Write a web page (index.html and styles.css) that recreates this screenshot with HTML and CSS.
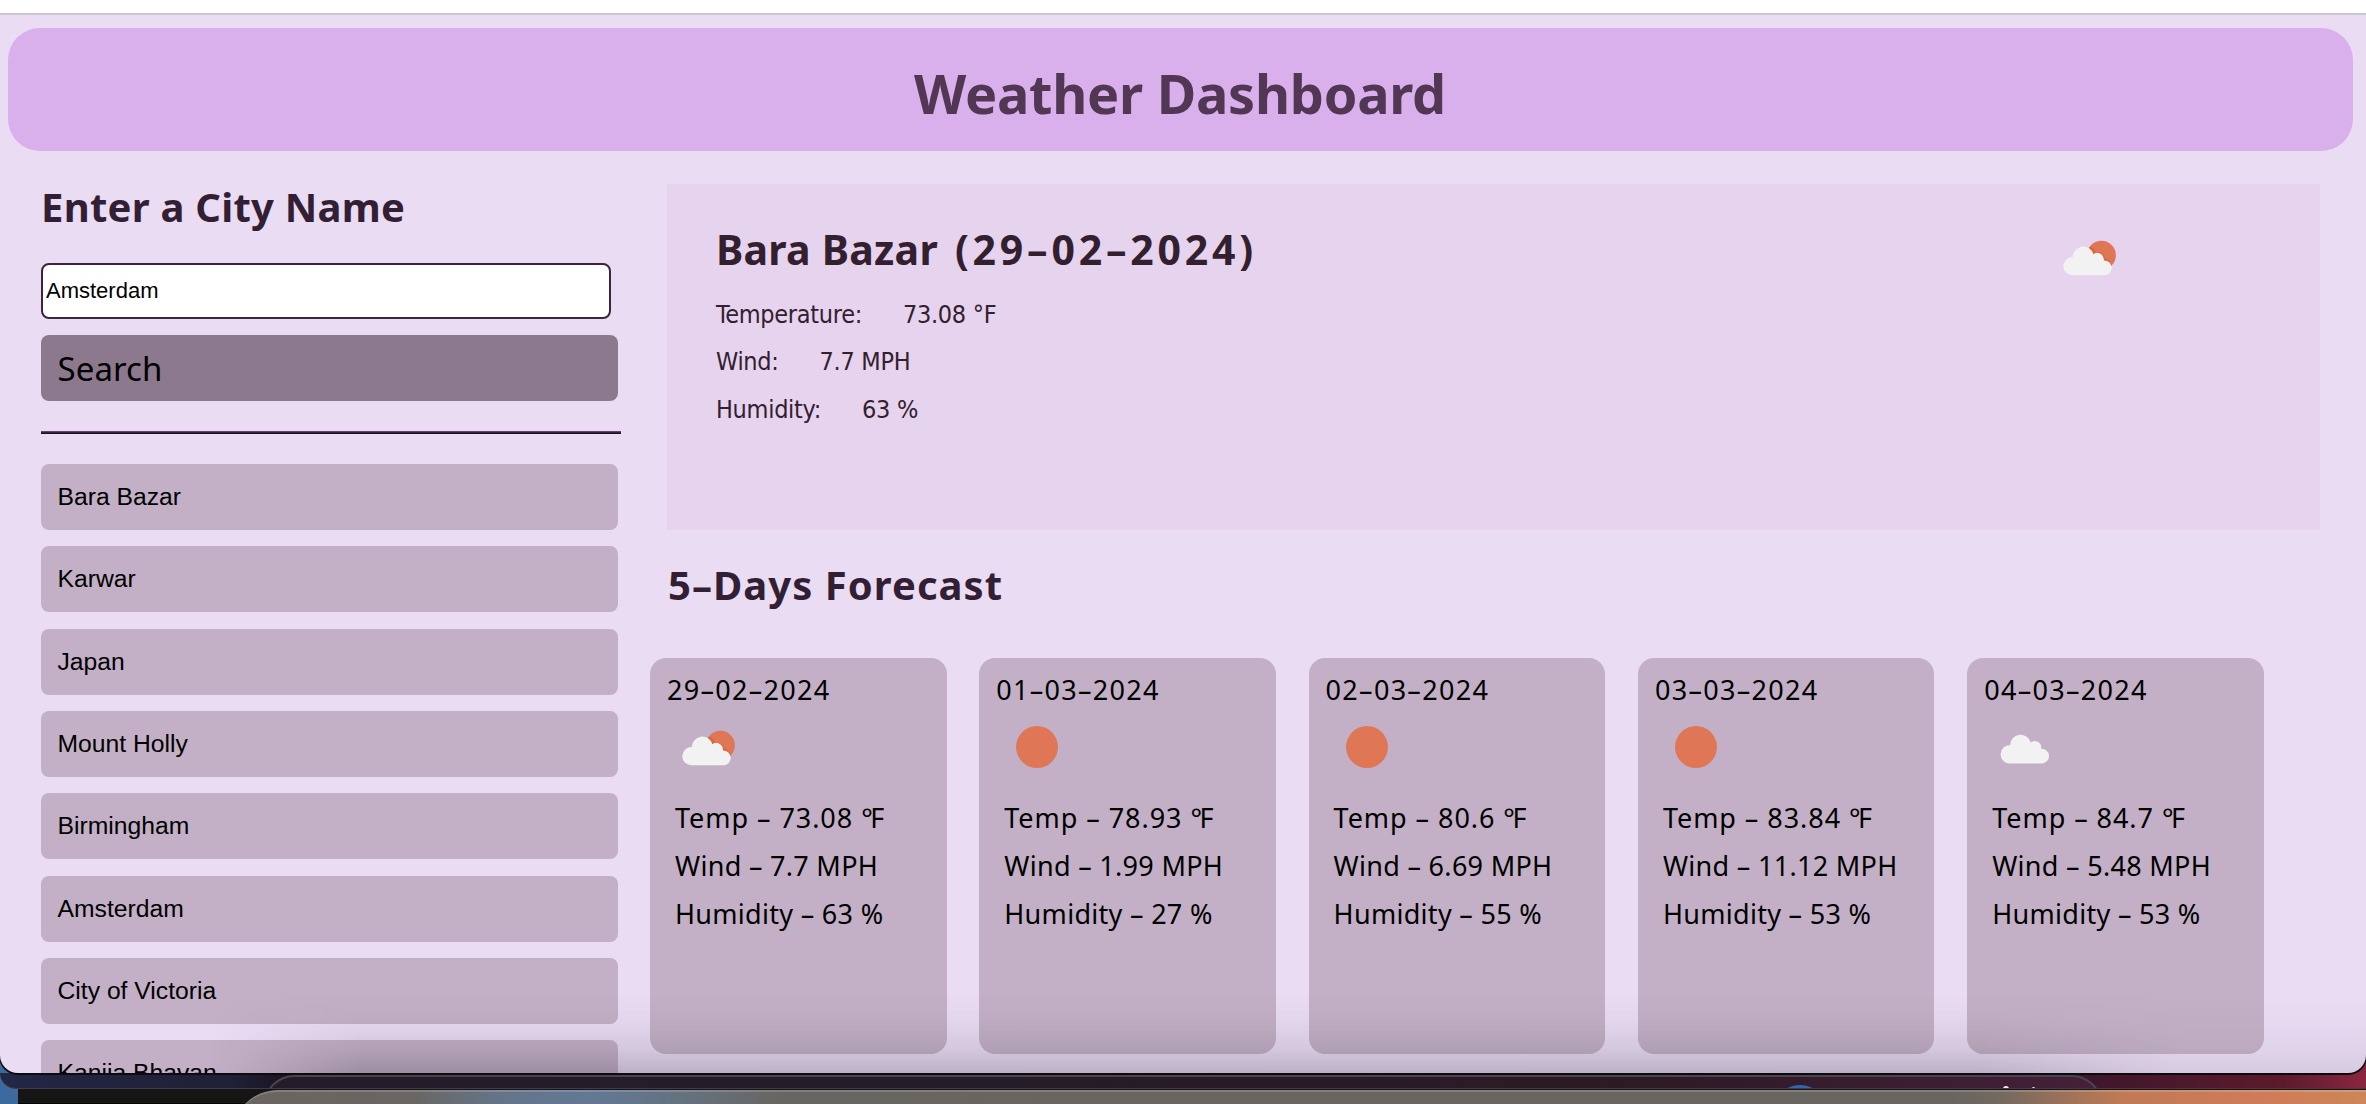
FILE: index.html
```html
<!DOCTYPE html>
<html lang="en">
<head>
<meta charset="utf-8">
<title>Weather Dashboard</title>
<link rel="stylesheet" href="styles.css">
</head>
<body>
<svg class="defs" aria-hidden="true">
  <symbol id="cloud" viewBox="0 0 82 82">
    <path d="M24 59.2A9 9 0 0 1 24.8 41A10.5 10.5 0 0 1 45.4 38.2A6.6 6.6 0 0 1 55.8 44.6A7.3 7.3 0 0 1 57 59.2Z" fill="#f2f2f2"/>
  </symbol>
  <symbol id="sun" viewBox="0 0 82 82">
    <circle cx="41" cy="41" r="21" fill="#df7757"/>
  </symbol>
  <symbol id="cloud-sun" viewBox="0 0 82 82">
    <circle cx="53.4" cy="39.3" r="14.5" fill="#df7757"/>
    <path d="M41 31Q46 31 47.5 36Q55 35 57 42.5Q61 43 63.5 48.5L60 52H40Z" fill="#dc6544"/>
    <use href="#cloud" width="82" height="82"/>
  </symbol>
</svg>
<div class="window">
  <div class="toolbar"></div>
  <header class="header"><h1>Weather Dashboard</h1></header>
  <main class="layout">
    <aside class="sidebar">
      <h2>Enter a City Name</h2>
      <input class="city" type="text" value="Amsterdam">
      <button class="search">Search</button>
      <div class="rule"></div>
      <div class="history">
        <button>Bara Bazar</button>
        <button>Karwar</button>
        <button>Japan</button>
        <button>Mount Holly</button>
        <button>Birmingham</button>
        <button>Amsterdam</button>
        <button>City of Victoria</button>
        <button>Kanija Bhavan</button>
      </div>
    </aside>
    <section class="content">
      <article class="today">
        <div class="today-text">
          <h2>Bara Bazar <span class="date">(29–02–2024)</span></h2>
          <p>Temperature:<span>73.08 °F</span></p>
          <p>Wind:<span>7.7 MPH</span></p>
          <p>Humidity:<span>63 %</span></p>
        </div>
        <svg class="icon"><use href="#cloud-sun"/></svg>
      </article>
      <h2 class="forecast-title">5–Days Forecast</h2>
      <div class="cards">
        <article class="card"><h3>29–02–2024</h3><svg class="icon"><use href="#cloud-sun"/></svg>
          <p class="temp">Temp – 73.08 <span class="deg">°</span>F</p><p>Wind – 7.7 MPH</p><p>Humidity – 63 %</p></article>
        <article class="card"><h3>01–03–2024</h3><svg class="icon"><use href="#sun"/></svg>
          <p class="temp">Temp – 78.93 <span class="deg">°</span>F</p><p>Wind – 1.99 MPH</p><p>Humidity – 27 %</p></article>
        <article class="card"><h3>02–03–2024</h3><svg class="icon"><use href="#sun"/></svg>
          <p class="temp">Temp – 80.6 <span class="deg">°</span>F</p><p>Wind – 6.69 MPH</p><p>Humidity – 55 %</p></article>
        <article class="card"><h3>03–03–2024</h3><svg class="icon"><use href="#sun"/></svg>
          <p class="temp">Temp – 83.84 <span class="deg">°</span>F</p><p>Wind – 11.12 MPH</p><p>Humidity – 53 %</p></article>
        <article class="card"><h3>04–03–2024</h3><svg class="icon"><use href="#cloud" x="1.3" y="-1.8"/></svg>
          <p class="temp">Temp – 84.7 <span class="deg">°</span>F</p><p>Wind – 5.48 MPH</p><p>Humidity – 53 %</p></article>
      </div>
    </section>
  </main>
  <div class="shade"></div>
</div>
<div class="desktop">
  <div class="strip"><div class="tray"><i class="dot"></i><i class="speck"></i><i class="speck small"></i></div></div>
  <div class="panel"></div>
  <div class="dock"></div>
</div>
</body>
</html>
```
FILE: styles.css
```css
* { box-sizing: border-box; }
body {
  margin: 0;
  height: 1104px;
  overflow: hidden;
  background: linear-gradient(90deg, #3c6a9f 0, #3c6a9f 40px, #14101a 60px, #14101a 2200px, #54182c 2290px, #8a263f 2366px);
  font-family: "Noto Sans", sans-serif;
  color: #000;
}
h1, h2, h3, p { margin: 0; }
.defs { display: none; }
.window {
  position: relative;
  z-index: 1;
  height: 1073px;
  overflow: hidden;
  background: #e9dcf3;
  border-radius: 0 0 18px 18px;
  box-shadow: 0 1px 0 1px #0d0b10;
}
.toolbar {
  height: 14.5px;
  background: #fff;
  border-bottom: 2px solid #cac8cd;
}
.header {
  height: 123px;
  margin: 13.5px 13px 0 8px;
  padding: 7px 1px 0 0;
  background: #d9b0eb;
  border-radius: 32px;
  text-align: center;
}
.header h1 {
  font-size: 54px;
  line-height: 117px;
  letter-spacing: -0.25px;
  color: #523754;
}
.layout {
  display: flex;
  padding-left: 41px;
}
.sidebar {
  width: 626px;
  padding-top: 30px;
  flex: none;
}
h2 {
  font-size: 40px;
  line-height: 50px;
  color: #331f33;
}
.sidebar h2 { letter-spacing: 0.25px; padding-top: 1px; margin-bottom: -1px; }
.city {
  display: block;
  width: 570px;
  height: 56px;
  margin: 32px 0 16px;
  padding: 0 3px;
  border: 2px solid #3a263c;
  border-radius: 8px;
  background: #fff;
  font: 22px "Liberation Sans", Arial, sans-serif;
  color: #000;
}
button {
  display: block;
  width: 576.5px;
  height: 66px;
  padding: 0 16.5px;
  border: 0;
  border-radius: 8px;
  background: #c3b0c6;
  font: 24.7px "Liberation Sans", Arial, sans-serif;
  color: #000;
  text-align: left;
}
.search {
  background: #8d798e;
  font: 33px "Noto Sans", sans-serif;
  letter-spacing: 0.1px;
}
.rule {
  width: 580px;
  height: 3px;
  margin: 30px 0;
  background: linear-gradient(#6b4075 34%, #3c1f45 34%, #3c1f45 67%, #1a1020 67%);
}
.history {
  display: flex;
  flex-direction: column;
  gap: 16.35px;
}
.history button { flex: none; }
.content {
  flex: none;
  width: 1653px;
  padding-top: 33px;
}
.today {
  display: flex;
  justify-content: space-between;
  height: 346px;
  padding: 31.5px 190px 0 49px;
  background: #e6d3ee;
}
.today-text { padding-top: 8.5px; color: #33202f; }
.today h2 {
  margin-bottom: 16.5px;
  font-size: 41px;
  letter-spacing: 0.25px;
  color: #33202f;
}
.today .date { margin-left: 6px; letter-spacing: 3.8px; }
.today p {
  font: 25px/47.5px "DejaVu Sans Condensed", "DejaVu Sans", sans-serif;
  font-stretch: condensed;
  letter-spacing: -0.3px;
}
.today p span { margin-left: 41px; }
.icon {
  display: block;
  flex: none;
  width: 82px;
  height: 82px;
}
.forecast-title {
  margin: 30px 0 48px 1px;
  letter-spacing: 1.05px;
}
.cards {
  display: flex;
  gap: 32.8px;
  margin-left: -17px;
}
.card {
  flex: none;
  width: 296.5px;
  height: 395.7px;
  padding: 15.5px 0 0 17px;
  border-radius: 16px;
  background: #c3b0c6;
}
.card h3 {
  font-size: 27px;
  line-height: 32px;
  font-weight: 400;
  letter-spacing: 1.3px;
}
.card .icon { margin-bottom: 6px; }
.card p {
  padding-left: 8px;
  font-size: 27px;
  line-height: 48px;
  letter-spacing: 0.3px;
  white-space: nowrap;
}
.card .temp { letter-spacing: 0.95px; }
.card .deg { letter-spacing: -2.5px; }

/* shadow cast by the dock over the lower edge of the window */
.shade {
  position: absolute;
  inset: auto 0 0 0;
  height: 80px;
  background: linear-gradient(transparent, rgba(30, 25, 40, 0.03) 35%, rgba(30, 25, 40, 0.1) 70%, rgba(30, 25, 40, 0.22));
  -webkit-mask-image: linear-gradient(90deg, transparent 210px, #000 360px, #000 1980px, rgba(0, 0, 0, 0.4) 2180px);
  mask-image: linear-gradient(90deg, transparent 210px, #000 360px, #000 1980px, rgba(0, 0, 0, 0.4) 2180px);
}
.desktop {
  position: relative;
  height: 31px;
}
.strip {
  height: 16px;
  padding: 2px 264px 0 264px;
  overflow: hidden;
  border-bottom: 1px solid #45394a;
  border-radius: 0 0 0 16px;
  background: linear-gradient(90deg, #222746 0, #202036 230px, #17131e 300px, #17131e 1900px, #42172b 2110px, #5c1a2c 2280px, #8a263f 2366px);
}
.tray {
  position: relative;
  height: 30px;
  border: 2px solid #4b434d;
  border-radius: 34px 34px 0 0;
  background: linear-gradient(90deg, #231d2b, #241c28 40%, #2c1a24 75%, #45203a);
}
.dot, .speck { position: absolute; border-radius: 50%; }
.dot { left: 1506px; top: 8px; width: 56px; height: 56px; background: #3067b5; }
.speck { left: 1737px; top: 9px; width: 6px; height: 6px; background: #eee; }
.speck.small { left: 1766px; top: 10px; width: 3px; height: 3px; }
.panel {
  height: 15px;
  margin-left: 18px;
  background: linear-gradient(#151515 13px, #2a2a2a 13px, #050505 14px);
}
.dock {
  position: absolute;
  left: 232px;
  right: 0;
  top: 17px;
  height: 60px;
  border-top: 2px solid rgba(255, 255, 255, 0.17);
  border-radius: 46px 0 0 0;
  background: linear-gradient(90deg, #6a6560 0, #696663 180px, #64758a 270px, #627894 360px, #65727f 450px, #686662 550px, #696560 1000px, #696560 1720px, #74695f 1770px, #c07a55 1890px, #cf7b59 2030px, #cc8658 2130px) border-box;
}
```
